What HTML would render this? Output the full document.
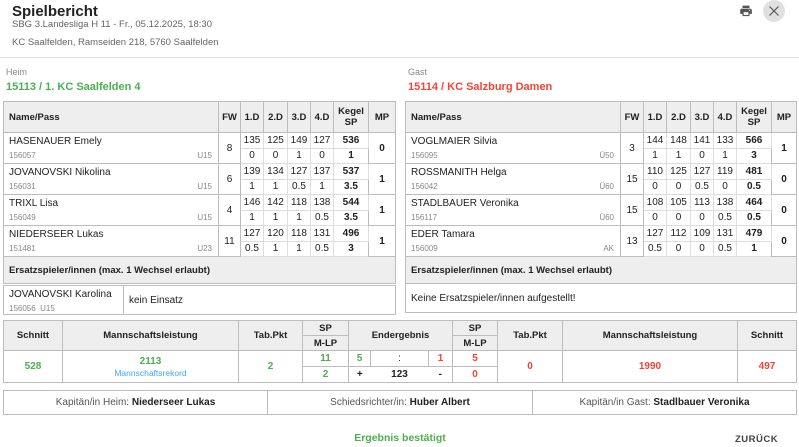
<!DOCTYPE html>
<html><head><meta charset="utf-8"><style>
*{box-sizing:border-box;margin:0;padding:0}
body{width:799px;height:447px;overflow:hidden;background:#fff;font-family:"Liberation Sans",sans-serif;color:#212121;position:relative}
.a{position:absolute}
table{border-collapse:collapse;table-layout:fixed;position:absolute}
td,th{border:1px solid #bdbdbd;font-size:10px;text-align:center;padding:0;overflow:hidden;white-space:nowrap}
th{background:#eee;font-weight:bold;font-size:9.5px}
.nm{text-align:left;padding-left:5px;vertical-align:top}
.nm .n{font-size:10px;margin-top:3px}
.nm .p{font-size:8px;color:#888;margin-top:4px;display:flex;justify-content:space-between;padding-right:6px}
td.s{height:15.5px;border-color:#ddd}
.b{font-weight:bold}
.g{color:#4caf50;font-weight:bold}
.r{color:#f44336;font-weight:bold}
.sec{background:#eee;text-align:left;padding-left:5px;font-weight:bold;font-size:9.5px;height:27px}
</style></head><body>
<div class="a" style="left:12px;top:3px;font-size:15px;font-weight:bold;color:#222">Spielbericht</div>
<div class="a" style="left:12px;top:19px;font-size:9.5px;color:#666">SBG 3.Landesliga H 11 - Fr., 05.12.2025, 18:30</div>
<div class="a" style="left:12px;top:37px;font-size:9.5px;color:#666">KC Saalfelden, Ramseiden 218, 5760 Saalfelden</div>
<svg class="a" style="left:739px;top:5px" width="14" height="13" viewBox="0 0 24 22"><path fill="#555" d="M19 6H5C3.3 6 2 7.3 2 9v6h4v4h12v-4h4V9c0-1.7-1.3-3-3-3zm-3 11H8v-5h8v5zm2-7a1 1 0 110-2 1 1 0 010 2zM18 1H6v4h12V1z"/></svg>
<div class="a" style="left:763px;top:0px;width:22px;height:22px;border-radius:50%;background:#e0e0e0"></div>
<svg class="a" style="left:768px;top:5px" width="12" height="12" viewBox="0 0 12 12"><path d="M1.5 1.5L10.5 10.5M10.5 1.5L1.5 10.5" stroke="#555" stroke-width="1.2"/></svg>
<div class="a" style="left:0;top:57px;width:799px;height:1px;background:#ddd"></div>

<div class="a" style="left:6px;top:67px;font-size:9px;color:#888">Heim</div>
<div class="a g" style="left:6px;top:81px;font-size:11px">15113 / 1. KC Saalfelden 4</div>
<div class="a" style="left:408px;top:67px;font-size:9px;color:#888">Gast</div>
<div class="a r" style="left:408px;top:81px;font-size:11px">15114 / KC Salzburg Damen</div>

<table style="left:3px;top:101px;width:392px">
<colgroup><col style="width:215px"><col style="width:22px"><col style="width:23px"><col style="width:24px"><col style="width:23px"><col style="width:23px"><col style="width:35px"><col style="width:27px"></colgroup>
<tr style="height:31px"><th class="nm" style="vertical-align:middle">Name/Pass</th><th>FW</th><th>1.D</th><th>2.D</th><th>3.D</th><th>4.D</th><th>Kegel<br>SP</th><th>MP</th></tr>
<tr><td class="nm" rowspan="2"><div class="n">HASENAUER Emely</div><div class="p"><span>156057</span><span>U15</span></div></td><td rowspan="2">8</td><td class="s">135</td><td class="s">125</td><td class="s">149</td><td class="s">127</td><td class="s b">536</td><td rowspan="2" class="b">0</td></tr>
<tr><td class="s">0</td><td class="s">0</td><td class="s">1</td><td class="s">0</td><td class="s b">1</td></tr>
<tr><td class="nm" rowspan="2"><div class="n">JOVANOVSKI Nikolina</div><div class="p"><span>156031</span><span>U15</span></div></td><td rowspan="2">6</td><td class="s">139</td><td class="s">134</td><td class="s">127</td><td class="s">137</td><td class="s b">537</td><td rowspan="2" class="b">1</td></tr>
<tr><td class="s">1</td><td class="s">1</td><td class="s">0.5</td><td class="s">1</td><td class="s b">3.5</td></tr>
<tr><td class="nm" rowspan="2"><div class="n">TRIXL Lisa</div><div class="p"><span>156049</span><span>U15</span></div></td><td rowspan="2">4</td><td class="s">146</td><td class="s">142</td><td class="s">118</td><td class="s">138</td><td class="s b">544</td><td rowspan="2" class="b">1</td></tr>
<tr><td class="s">1</td><td class="s">1</td><td class="s">1</td><td class="s">0.5</td><td class="s b">3.5</td></tr>
<tr><td class="nm" rowspan="2"><div class="n">NIEDERSEER Lukas</div><div class="p"><span>151481</span><span>U23</span></div></td><td rowspan="2">11</td><td class="s">127</td><td class="s">120</td><td class="s">118</td><td class="s">131</td><td class="s b">496</td><td rowspan="2" class="b">1</td></tr>
<tr><td class="s">0.5</td><td class="s">1</td><td class="s">1</td><td class="s">0.5</td><td class="s b">3</td></tr>
<tr><td colspan="8" class="sec">Ersatzspieler/innen (max. 1 Wechsel erlaubt)</td></tr>
</table>
<table style="left:3px;top:285px;width:392px">
<colgroup><col style="width:120px"><col style="width:272px"></colgroup>
<tr style="height:29px"><td class="nm"><div class="n">JOVANOVSKI Karolina</div><div class="p" style="justify-content:flex-start"><span>156056&nbsp;&nbsp;U15</span></div></td><td style="text-align:left;padding-left:5px">kein Einsatz</td></tr>
</table>

<table style="left:405px;top:101px;width:391px">
<colgroup><col style="width:215px"><col style="width:23px"><col style="width:23px"><col style="width:24px"><col style="width:23px"><col style="width:23px"><col style="width:35px"><col style="width:25px"></colgroup>
<tr style="height:31px"><th class="nm" style="vertical-align:middle">Name/Pass</th><th>FW</th><th>1.D</th><th>2.D</th><th>3.D</th><th>4.D</th><th>Kegel<br>SP</th><th>MP</th></tr>
<tr><td class="nm" rowspan="2"><div class="n">VOGLMAIER Silvia</div><div class="p"><span>156095</span><span>Ü50</span></div></td><td rowspan="2">3</td><td class="s">144</td><td class="s">148</td><td class="s">141</td><td class="s">133</td><td class="s b">566</td><td rowspan="2" class="b">1</td></tr>
<tr><td class="s">1</td><td class="s">1</td><td class="s">0</td><td class="s">1</td><td class="s b">3</td></tr>
<tr><td class="nm" rowspan="2"><div class="n">ROSSMANITH Helga</div><div class="p"><span>156042</span><span>Ü60</span></div></td><td rowspan="2">15</td><td class="s">110</td><td class="s">125</td><td class="s">127</td><td class="s">119</td><td class="s b">481</td><td rowspan="2" class="b">0</td></tr>
<tr><td class="s">0</td><td class="s">0</td><td class="s">0.5</td><td class="s">0</td><td class="s b">0.5</td></tr>
<tr><td class="nm" rowspan="2"><div class="n">STADLBAUER Veronika</div><div class="p"><span>156117</span><span>Ü60</span></div></td><td rowspan="2">15</td><td class="s">108</td><td class="s">105</td><td class="s">113</td><td class="s">138</td><td class="s b">464</td><td rowspan="2" class="b">0</td></tr>
<tr><td class="s">0</td><td class="s">0</td><td class="s">0</td><td class="s">0.5</td><td class="s b">0.5</td></tr>
<tr><td class="nm" rowspan="2"><div class="n">EDER Tamara</div><div class="p"><span>156009</span><span>AK</span></div></td><td rowspan="2">13</td><td class="s">127</td><td class="s">112</td><td class="s">109</td><td class="s">131</td><td class="s b">479</td><td rowspan="2" class="b">0</td></tr>
<tr><td class="s">0.5</td><td class="s">0</td><td class="s">0</td><td class="s">0.5</td><td class="s b">1</td></tr>
<tr><td colspan="8" class="sec">Ersatzspieler/innen (max. 1 Wechsel erlaubt)</td></tr>
<tr style="height:29px"><td colspan="8" style="text-align:left;padding-left:5px">Keine Ersatzspieler/innen aufgestellt!</td></tr>
</table>

<table style="left:3px;top:320px;width:793px">
<colgroup><col style="width:59px"><col style="width:176px"><col style="width:64px"><col style="width:46px"><col style="width:22px"><col style="width:58px"><col style="width:24px"><col style="width:45px"><col style="width:65px"><col style="width:175px"><col style="width:59px"></colgroup>
<tr style="height:15px"><th rowspan="2">Schnitt</th><th rowspan="2">Mannschaftsleistung</th><th rowspan="2">Tab.Pkt</th><th>SP</th><th colspan="3" rowspan="2">Endergebnis</th><th>SP</th><th rowspan="2">Tab.Pkt</th><th rowspan="2">Mannschaftsleistung</th><th rowspan="2">Schnitt</th></tr>
<tr style="height:15px"><th>M-LP</th><th>M-LP</th></tr>
<tr style="height:16px"><td rowspan="2" class="g">528</td><td rowspan="2"><div class="g">2113</div><div style="color:#42a5f5;font-size:8.5px;margin-top:1px">Mannschaftsrekord</div></td><td rowspan="2" class="g">2</td><td class="g">11</td><td class="g">5</td><td>:</td><td class="r">1</td><td class="r">5</td><td rowspan="2" class="r">0</td><td rowspan="2" class="r">1990</td><td rowspan="2" class="r">497</td></tr>
<tr style="height:16px"><td class="g">2</td><td class="b" style="border-right:none">+</td><td class="b" style="border-left:none;border-right:none">123</td><td class="b" style="border-left:none">-</td><td class="r">0</td></tr>
</table>

<table style="left:3px;top:390px;width:793px">
<colgroup><col style="width:264px"><col style="width:265px"><col style="width:264px"></colgroup>
<tr style="height:24px"><td style="color:#555">Kapitän/in Heim: <b style="color:#222">Niederseer Lukas</b></td><td style="color:#555">Schiedsrichter/in: <b style="color:#222">Huber Albert</b></td><td style="color:#555">Kapitän/in Gast: <b style="color:#222">Stadlbauer Veronika</b></td></tr>
</table>

<div class="a g" style="left:300px;width:200px;text-align:center;top:432px;font-size:10.5px">Ergebnis bestätigt</div>
<div class="a" style="left:735px;top:434px;font-size:9.5px;font-weight:bold;color:#444;letter-spacing:0.5px">ZURÜCK</div>
</body></html>
